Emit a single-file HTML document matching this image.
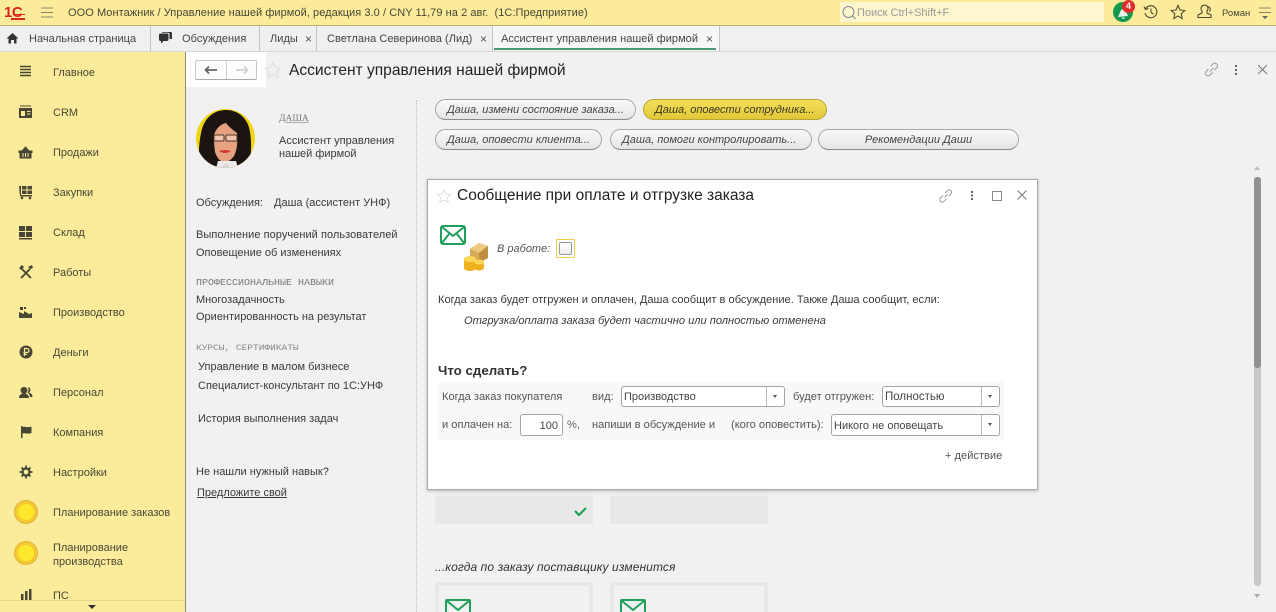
<!DOCTYPE html>
<html lang="ru"><head><meta charset="utf-8"><title>Ассистент управления нашей фирмой</title>
<style>
html,body{margin:0;padding:0;width:1276px;height:612px;overflow:hidden;background:#f1f1f1}
body{position:relative;font-family:"Liberation Sans",sans-serif;font-size:11px;color:#3a3a3a}
div,span,svg{position:absolute}
.t{white-space:nowrap;height:14px;line-height:14px;margin-top:1px}
.f{font-size:11.100px;color:#555}
.b{border:1px solid #a8a8a8;border-radius:12px;height:19px;line-height:20px;background:linear-gradient(#f9f9f9,#e6e6e6);font-style:italic;font-size:11px;white-space:nowrap;box-sizing:content-box;border-bottom-color:#8a8a8a;color:#444}
.inp{background:#fff;border:1px solid #a5a5a5;border-radius:3px;box-sizing:border-box;height:21px;line-height:21px;padding-left:2px;font-size:11px;color:#444;white-space:nowrap}
.dd{position:absolute;right:0;top:0;width:17px;height:19px;border-left:1px solid #bbb}
.dd:after{content:"";position:absolute;left:6px;top:8px;border:2.500px solid transparent;border-top:3px solid #555;border-bottom:0}
.m{left:53px;color:#4a4636;font-size:11px}
.i{left:18px;width:16px;height:16px}
.tab{top:26px;height:25px;line-height:26px;white-space:nowrap;font-size:11px;color:#444;letter-spacing:.04px}
.x{top:31px;color:#555;font-size:12px}
.sep{top:26px;width:1px;height:25px;background:#c4c4c4}
.h{font-family:"Liberation Mono",monospace;font-size:10px;color:#777}
.card{background:#e8e8e8}
</style></head><body>
<!-- top bar -->
<div style="left:0;top:0;width:1276px;height:25px;background:#fbeb9b;border-bottom:1px solid #b5ac80"></div>
<div class="t" style="left:4px;top:4px;color:#d8271c;font-weight:bold;font-size:15px;letter-spacing:-.5px;line-height:15px">1С</div>
<div style="left:13px;top:14px;width:12px;height:1px;background:#d8271c"></div>
<div style="left:11px;top:18px;width:14px;height:2px;background:#d8271c"></div>
<svg style="left:41px;top:7px" width="13" height="11"><path d="M0 1h12M0 5.500h12M0 10h12" stroke="#8d886c" stroke-width="1"/></svg>
<div class="t" style="left:68px;top:5px;font-size:11px;letter-spacing:.06px;color:#4a4636">ООО Монтажник / Управление нашей фирмой, редакция 3.0 / CNY 11,79 на 2 авг.&nbsp; (1С:Предприятие)</div>
<div style="left:840px;top:2px;width:264px;height:20px;background:#fdf7d0"></div>
<svg style="left:841px;top:5px" width="16" height="16" fill="none" stroke="#888"><circle cx="7.500" cy="7" r="5.500"/><path d="M11.500 11l3 3"/></svg>
<div class="t" style="left:857px;top:5px;color:#999;font-size:11px">Поиск Ctrl+Shift+F</div>
<div style="left:1113px;top:2px;width:20px;height:20px;border-radius:10px;background:#12994f"></div>
<svg style="left:1116px;top:6px" width="13" height="14"><path d="M2 11L5 4l4-2 2 6 1 2zM5 12l3-1 .5 2z" fill="#e8f5ee"/></svg>
<div style="left:1122px;top:0;width:13px;height:13px;border-radius:7px;background:#e42b2b;color:#fff;font-size:9px;font-weight:bold;text-align:center;line-height:12px">4</div>
<svg style="left:1143px;top:4px" width="16" height="16" fill="none" stroke="#4f4a35" stroke-width="1.100"><path d="M2.500 5A6 6 0 1 1 2 9M1 2.500l1.500 3 3-1M8 4.500V8.500l2.500 1.500"/></svg>
<svg style="left:1170px;top:4px" width="16" height="16" fill="none" stroke="#4f4a35" stroke-width="1.100"><path d="M8 1.500l2 4.500 4.800.5-3.600 3.200 1 4.800L8 12l-4.200 2.500 1-4.800L1.200 6.500 6 6z"/></svg>
<svg style="left:1197px;top:4px" width="16" height="16" fill="none" stroke="#4f4a35" stroke-width="1.100"><path d="M5 7a3.500 3.500 0 1 1 5 0v2l4 2v2.500H1V11l4-2zM10.500 2.500a3 3 0 0 1 2 5"/></svg>
<div class="t" style="left:1222px;top:6px;font-size:9.500px;color:#4a4636">Роман</div>
<svg style="left:1258px;top:7px" width="14" height="13"><path d="M1 1h12M1 5.500h12" stroke="#8d886c"/><path d="M4 9h6l-3 3z" fill="#666"/></svg>

<!-- tabs -->
<div style="left:0;top:26px;width:1276px;height:25px;background:#f0f0f0;border-bottom:1px solid #d6d6d6"></div>
<svg style="left:6px;top:32px" width="13" height="12"><path d="M6.500 1L.5 6.500H2.500V11.500H5V8H8V11.500H10.500V6.500H12.500z" fill="#333"/></svg>
<div class="tab" style="left:29px">Начальная страница</div><div class="sep" style="left:150px"></div>
<svg style="left:158px;top:31px" width="15" height="14"><path d="M1 4q0-1.500 1.500-1.500H9Q10.500 2.500 10.500 4V8.500Q10.500 10 9 10H5.500L3 12.500V10H2.500Q1 10 1 8.500z" fill="#333"/><path d="M4 1h8.500Q14 1 14 2.500V8h-2.500V3.500Q11.500 1.800 9.500 1.800H4z" fill="#333"/></svg>
<div class="tab" style="left:182px">Обсуждения</div><div class="sep" style="left:259px"></div>
<div class="tab" style="left:270px">Лиды</div><div class="t x" style="left:305px">×</div><div class="sep" style="left:316px"></div>
<div class="tab" style="left:327px">Светлана Северинова (Лид)</div><div class="t x" style="left:480px">×</div><div class="sep" style="left:492px"></div>
<div style="left:493px;top:26px;width:226px;height:25px;background:#f6f6f6"></div>
<div class="tab" style="left:501px">Ассистент управления нашей фирмой</div><div class="t x" style="left:706px">×</div><div class="sep" style="left:719px"></div>
<div style="left:494px;top:48px;width:222px;height:2px;background:#4f9a76"></div>

<!-- sidebar -->
<div style="left:0;top:52px;width:185px;height:560px;background:#fbec9b;border-right:1px solid #8c8a78"></div>
<svg class="i" style="top:64px" width="16" height="16"><path d="M2 2.500h11M2 5.500h11M2 8.500h11M2 11.500h11" stroke="#4a4636" stroke-width="1.600"/></svg>
<svg class="i" style="top:104px" width="16" height="16"><path d="M2 1.500h11v1H2zM1 4h13v10H1z" fill="#4a4636"/><rect x="3" y="7" width="4" height="5" fill="#fbec9b"/><path d="M9 7.500h3.500M9 10h3.500" stroke="#fbec9b"/></svg>
<svg class="i" style="top:144px" width="16" height="16"><path d="M1 7h13v1.500h-1V14H2V8.500H1zM4 7l3.500-4L11 7" fill="#4a4636" stroke="#4a4636"/><path d="M5 9v4M7.500 9v4M10 9v4" stroke="#fbec9b"/></svg>
<svg class="i" style="top:184px" width="16" height="16"><path d="M1 2h2v9H14v1.500H2z" fill="#4a4636"/><path d="M4 2h4.500v3.500H4zM9.500 2H14v3.500H9.500zM4 6.500h4.500V10H4zM9.500 6.500H14V10H9.500z" fill="#4a4636"/><circle cx="4" cy="14" r="1.300" fill="#4a4636"/><circle cx="12" cy="14" r="1.300" fill="#4a4636"/></svg>
<svg class="i" style="top:224px" width="16" height="16"><path d="M1 2h6v5H1zM8 2h6v5H8zM1 8h6v5H1zM8 8h6v5H8zM1 14h13v1.500H1z" fill="#4a4636"/></svg>
<svg class="i" style="top:264px" width="16" height="16"><path d="M3 14L12 5M4 5l9 9" stroke="#4a4636" stroke-width="1.800"/><path d="M1 4l3-3 2 2-3 3zM10 3l4-2 1 3-3 1z" fill="#4a4636"/></svg>
<svg class="i" style="top:304px" width="16" height="16"><path d="M1 14V8l5 2V7l5 3 3-1v5zM2 3h3v3H2zM6 3h2v2H6z" fill="#4a4636"/></svg>
<svg class="i" style="top:344px" width="16" height="16"><circle cx="8" cy="8" r="6.500" fill="#4a4636"/><path d="M6.500 12V4.500h2.500a1.800 1.800 0 0 1 0 4H5.500M5.500 10.300H9" fill="none" stroke="#fbec9b" stroke-width="1.200"/></svg>
<svg class="i" style="top:384px" width="16" height="16"><path d="M1 14c0-3 2-4 3.500-4.500a3.500 3.500 0 1 1 3 0C9 10 11 11 11 14z" fill="#4a4636"/><path d="M10 3a3 3 0 0 1 1 5.500c2 .5 3.500 2 3.500 4.500H12c-.2-2-1-3.500-2.500-4.500A5 5 0 0 0 10 3z" fill="#4a4636"/></svg>
<svg class="i" style="top:424px" width="16" height="16"><path d="M3 2h1.500v12H3z" fill="#4a4636"/><path d="M4.500 3c3-1 5 1 9-.5V9c-4 1.500-6-.5-9 .5z" fill="#4a4636"/></svg>
<svg class="i" style="top:464px" width="16" height="16"><circle cx="8" cy="8" r="3.500" fill="none" stroke="#4a4636" stroke-width="2.200"/><path d="M8 1.500v2.500M8 12v2.500M1.500 8H4M12 8h2.500M3.500 3.500l1.800 1.800M10.700 10.700l1.800 1.800M3.500 12.500l1.800-1.800M10.700 5.300l1.800-1.800" stroke="#4a4636" stroke-width="1.800"/></svg>
<div class="t m" style="top:65px">Главное</div>
<div class="t m" style="top:105px">CRM</div>
<div class="t m" style="top:145px">Продажи</div>
<div class="t m" style="top:185px">Закупки</div>
<div class="t m" style="top:225px">Склад</div>
<div class="t m" style="top:265px">Работы</div>
<div class="t m" style="top:305px">Производство</div>
<div class="t m" style="top:345px">Деньги</div>
<div class="t m" style="top:385px">Персонал</div>
<div class="t m" style="top:425px">Компания</div>
<div class="t m" style="top:465px">Настройки</div>
<div style="left:15px;top:501px;width:22px;height:22px;border-radius:50%;background:#fde92c;border:3px solid #f5c92f;box-sizing:border-box;box-shadow:0 0 0 1px #dfb53a"></div>
<div class="t m" style="top:505px">Планирование заказов</div>
<div style="left:15px;top:542px;width:22px;height:22px;border-radius:50%;background:#fde92c;border:3px solid #f5c92f;box-sizing:border-box;box-shadow:0 0 0 1px #dfb53a"></div>
<div class="t m" style="top:540px">Планирование</div>
<div class="t m" style="top:554px">производства</div>
<svg class="i" style="top:587px" width="16" height="14"><path d="M3 7h2.500v6H3zM7 4h2.500v9H7zM11 2h2.500v11H11z" fill="#4a4636"/></svg>
<div class="t m" style="top:588px">ПС</div>
<div style="left:0;top:600px;width:185px;height:12px;background:#fbec9b;border-top:1px solid #e4d68e;box-sizing:border-box"></div>
<div style="left:88px;top:605px;border:4px solid transparent;border-top:4px solid #333;border-bottom:0"></div>

<!-- header -->
<div style="left:186px;top:52px;width:80px;height:35px;background:#fff"></div>
<div style="left:195px;top:60px;width:60px;height:18px;border:1px solid #c6c6c6;border-radius:2px;background:#fcfcfc;border-bottom-color:#aaa;box-sizing:content-box"></div>
<div style="left:226px;top:61px;width:1px;height:18px;background:#cfcfcf"></div>
<svg style="left:204px;top:65px" width="14" height="10"><path d="M1 5h12M5 1.500L1.500 5 5 8.500" fill="none" stroke="#666" stroke-width="1.800"/></svg>
<svg style="left:235px;top:65px" width="14" height="10"><path d="M1 5h11M9 1.500L12.500 5 9 8.500" fill="none" stroke="#cfcfcf" stroke-width="1.800"/></svg>
<svg style="left:264px;top:61px" width="18" height="18" fill="none" stroke="#dedede"><path d="M9 1.500l2.300 5 5.400.6-4 3.700 1.100 5.400L9 13.400l-4.800 2.800 1.100-5.400-4-3.700 5.400-.6z"/></svg>
<div class="t" style="left:289px;top:60px;height:20px;line-height:20px;font-size:15.550px;color:#222">Ассистент управления нашей фирмой</div>
<svg style="left:1204px;top:62px" width="15" height="15" fill="none" stroke="#9b9b9b" stroke-width="1"><path d="M6 9.500l3.500-3.500M6.500 4.500L9 2a2.500 2.500 0 0 1 3.800 3.500L10.500 8M8.500 10.500L6 13a2.500 2.500 0 0 1-3.800-3.500L4.500 7"/></svg>
<svg style="left:1234px;top:64px" width="5" height="12"><path d="M1 1h2v2H1zM1 5h2v2H1zM1 9h2v2H1z" fill="#666"/></svg>
<svg style="left:1257px;top:64px" width="11" height="11"><path d="M1 1l9 9M10 1l-9 9" stroke="#777"/></svg>

<!-- left panel -->
<svg style="left:196px;top:109px" width="59" height="59" viewBox="0 0 59 59">
 <defs><clipPath id="c"><circle cx="29.500" cy="29.500" r="29.500"/></clipPath></defs>
 <g clip-path="url(#c)">
  <rect width="59" height="59" fill="#f0d515"/>
  <path d="M4 59C2 45 3 34 5 24 8 8 19 1 30 1c12 0 22 8 24 22 2 12 1 25-1 36z" fill="#1c1411"/>
  <path d="M18 26C20 19 25 15 30 14c3 4 7 7 11 10 1 9 0 17-3 23-3 4-6 6-9 6-5 0-8-4-10-10-1-6-1-12-1-17z" fill="#e6a181"/>
  <path d="M22 52h18l2 7H20z" fill="#ecebe9"/>
  <path d="M30 54l-5 5h10z" fill="#d8d5d2"/>
  <rect x="18" y="26" width="10" height="6" rx="1" fill="#f3c4ac" stroke="#4a3328"/>
  <rect x="30" y="26" width="11" height="6" rx="1" fill="#f3c4ac" stroke="#4a3328"/>
  <path d="M23 42q6-2 12 0-6 4-12 0z" fill="#d43a30"/>
 </g>
</svg>
<div class="t h" style="left:279px;top:111px;font-family:'Liberation Serif',serif;font-size:9.500px;text-decoration:underline;text-decoration-color:#aaa">ДАША</div>
<div class="t" style="left:279px;top:133px">Ассистент управления</div>
<div class="t" style="left:279px;top:146px">нашей фирмой</div>
<div class="t" style="left:196px;top:195px">Обсуждения:</div>
<div class="t" style="left:274px;top:195px">Даша (ассистент УНФ)</div>
<div class="t" style="left:196px;top:227px;letter-spacing:.05px">Выполнение поручений пользователей</div>
<div class="t" style="left:196px;top:245px">Оповещение об изменениях</div>
<div class="t h" style="left:196px;top:276px;transform-origin:0 50%;transform:scaleY(.9)">ПРОФЕССИОНАЛЬНЫЕ НАВЫКИ</div>
<div class="t" style="left:196px;top:292px">Многозадачность</div>
<div class="t" style="left:196px;top:309px">Ориентированность на результат</div>
<div class="t h" style="left:196px;top:340px;color:#888;font-size:9.500px;transform-origin:0 50%;transform:scaleY(.9)">КУРСЫ, СЕРТИФИКАТЫ</div>
<div class="t" style="left:198px;top:359px">Управление в малом бизнесе</div>
<div class="t" style="left:198px;top:378px">Специалист-консультант по 1С:УНФ</div>
<div class="t" style="left:198px;top:411px">История выполнения задач</div>
<div class="t" style="left:196px;top:464px">Не нашли нужный навык?</div>
<div class="t" style="left:197px;top:485px;text-decoration:underline">Предложите свой</div>
<div style="left:416px;top:100px;height:512px;border-left:1px dotted #bdbdbd"></div>

<!-- pill buttons -->
<div class="b" style="left:435px;top:99px;width:199px;text-indent:11px">Даша, измени состояние заказа...</div>
<div class="b" style="left:643px;top:99px;width:182px;text-indent:11px;background:linear-gradient(#f2e05a,#e2c837);border-color:#b9a53a;color:#3a3520">Даша, оповести сотрудника...</div>
<div class="b" style="left:435px;top:129px;width:165px;text-indent:11px">Даша, оповести клиента...</div>
<div class="b" style="left:610px;top:129px;width:200px;text-indent:11px">Даша, помоги контролировать...</div>
<div class="b" style="left:818px;top:129px;width:199px;text-align:center">Рекомендации Даши</div>

<!-- cards behind -->
<div style="left:435px;top:485px;width:158px;height:39px" class="card"></div>
<div style="left:610px;top:485px;width:158px;height:39px" class="card"></div>
<div style="left:435px;top:490px;width:158px;height:6px;background:#eeeeee"></div>
<div style="left:610px;top:490px;width:158px;height:6px;background:#eeeeee"></div>
<svg style="left:573px;top:505px" width="15" height="12"><path d="M2 6l4 4 7-7" fill="none" stroke="#1ea05a" stroke-width="2.200"/></svg>
<div class="t" style="left:435px;top:559px;font-style:italic;font-size:12px;letter-spacing:.1px;color:#333">...когда по заказу поставщику изменится</div>
<div style="left:435px;top:582px;width:158px;height:30px;box-sizing:border-box;border:4px solid #e8e8e8;border-bottom:0"></div>
<div style="left:610px;top:582px;width:158px;height:30px;box-sizing:border-box;border:4px solid #e8e8e8;border-bottom:0"></div>
<svg style="left:445px;top:599px" width="26" height="13" fill="none" stroke="#1ea05a" stroke-width="2"><path d="M1 13V2a1 1 0 0 1 1-1h22a1 1 0 0 1 1 1v11M2 2l11 9 11-9"/></svg>
<svg style="left:620px;top:599px" width="26" height="13" fill="none" stroke="#1ea05a" stroke-width="2"><path d="M1 13V2a1 1 0 0 1 1-1h22a1 1 0 0 1 1 1v11M2 2l11 9 11-9"/></svg>

<!-- scrollbar -->
<div style="left:1254px;top:177px;width:7px;height:409px;border-radius:3px;background:#c9c9c9"></div>
<div style="left:1254px;top:177px;width:7px;height:191px;border-radius:3px;background:#919191"></div>
<div style="left:1254px;top:166px;border:3.500px solid transparent;border-bottom:4px solid #bbb;border-top:0"></div>
<div style="left:1254px;top:594px;border:3.500px solid transparent;border-top:4px solid #aaa;border-bottom:0"></div>

<!-- dialog -->
<div style="left:427px;top:179px;width:611px;height:311px;box-sizing:border-box;background:#fff;border:1px solid #a9a9a9;box-shadow:0 1px 3px rgba(0,0,0,.25)"></div>
<svg style="left:436px;top:188px" width="16" height="16" fill="none" stroke="#e2e2e2"><path d="M8 1.500l2 4.500 4.800.5-3.600 3.200 1 4.800L8 12l-4.200 2.500 1-4.800L1.200 6.500 6 6z"/></svg>
<div class="t" style="left:457px;top:185px;height:20px;line-height:20px;font-size:15.500px;color:#222">Сообщение при оплате и отгрузке заказа</div>
<svg style="left:939px;top:189px" width="14" height="14" fill="none" stroke="#9b9b9b" stroke-width="1"><path d="M5.500 8.500l3-3M6 4l2.500-2.500a2.300 2.300 0 0 1 3.500 3.200L10 7M7.500 9.800L5 12.300a2.300 2.300 0 0 1-3.500-3.200L4 6.500"/></svg>
<svg style="left:970px;top:190px" width="5" height="11"><path d="M1 1h2v2H1zM1 4.500h2v2H1zM1 8h2v2H1z" fill="#666"/></svg>
<div style="left:992px;top:191px;width:8px;height:8px;border:1px solid #888;box-sizing:content-box"></div>
<svg style="left:1017px;top:190px" width="10" height="10"><path d="M.5.500l9 9M9.500.500l-9 9" stroke="#777"/></svg>
<svg style="left:440px;top:225px" width="27" height="21" fill="none" stroke="#1ea05a" stroke-width="2"><rect x="1" y="1" width="24" height="18" rx="2"/><path d="M2 2l11 9 11-9M2 18l7-9M24 18l-7-9"/></svg>
<svg style="left:462px;top:241px" width="28" height="30"><path d="M8 8l9-6 9 3v12l-9 5-9-4z" fill="#d6aa54"/><path d="M8 8l9 4 9-7-9-3z" fill="#ecc97d"/><path d="M17 12v10l9-5V5z" fill="#bd8f3f"/><rect x="2" y="18" width="12" height="9" fill="#efb21e"/><ellipse cx="8" cy="27" rx="6" ry="3" fill="#efb21e"/><ellipse cx="8" cy="18" rx="6" ry="3" fill="#fbd65b"/><rect x="12" y="21" width="10" height="6" fill="#efb21e"/><ellipse cx="17" cy="27" rx="5" ry="2.500" fill="#efb21e"/><ellipse cx="17" cy="21" rx="5" ry="2.500" fill="#fbd65b"/></svg>
<div class="t" style="left:497px;top:241px;font-style:italic;color:#555">В работе:</div>
<div style="left:556px;top:239px;width:19px;height:19px;box-sizing:border-box;border:1px solid #f0cf55;background:#fff"></div>
<div style="left:559px;top:242px;width:13px;height:13px;box-sizing:border-box;border:1px solid #999;border-radius:2px;background:linear-gradient(#fff,#eee)"></div>
<div class="t" style="left:438px;top:292px;font-size:11.100px">Когда заказ будет отгружен и оплачен, Даша сообщит в обсуждение. Также Даша сообщит, если:</div>
<div class="t" style="left:464px;top:313px;font-style:italic;font-size:11.100px">Отгрузка/оплата заказа будет частично или полностью отменена</div>
<div class="t" style="left:438px;top:362px;height:16px;line-height:16px;font-size:13.300px;font-weight:bold;color:#333">Что сделать?</div>
<div style="left:438px;top:382px;width:566px;height:58px;background:#f8f8f8"></div>
<div class="t f" style="left:442px;top:389px">Когда заказ покупателя</div>
<div class="t f" style="left:592px;top:389px">вид:</div>
<div class="inp" style="left:621px;top:386px;width:164px">Производство<span class="dd"></span></div>
<div class="t f" style="left:793px;top:389px">будет отгружен:</div>
<div class="inp" style="left:882px;top:386px;width:118px;font-size:11.500px">Полностью<span class="dd"></span></div>
<div class="t f" style="left:442px;top:417px">и оплачен на:</div>
<div class="inp" style="left:520px;top:414px;width:43px;text-align:right;padding:0 4px 0 0;height:22px;line-height:22px">100</div>
<div class="t f" style="left:567px;top:417px;color:#666">%,</div>
<div class="t f" style="left:592px;top:417px">напиши в обсуждение и</div>
<div class="t f" style="left:731px;top:417px">(кого оповестить):</div>
<div class="inp" style="left:831px;top:414px;width:169px;height:22px;line-height:22px">Никого не оповещать<span class="dd" style="height:20px"></span></div>
<div class="t f" style="left:945px;top:448px">+ действие</div>
</body></html>
